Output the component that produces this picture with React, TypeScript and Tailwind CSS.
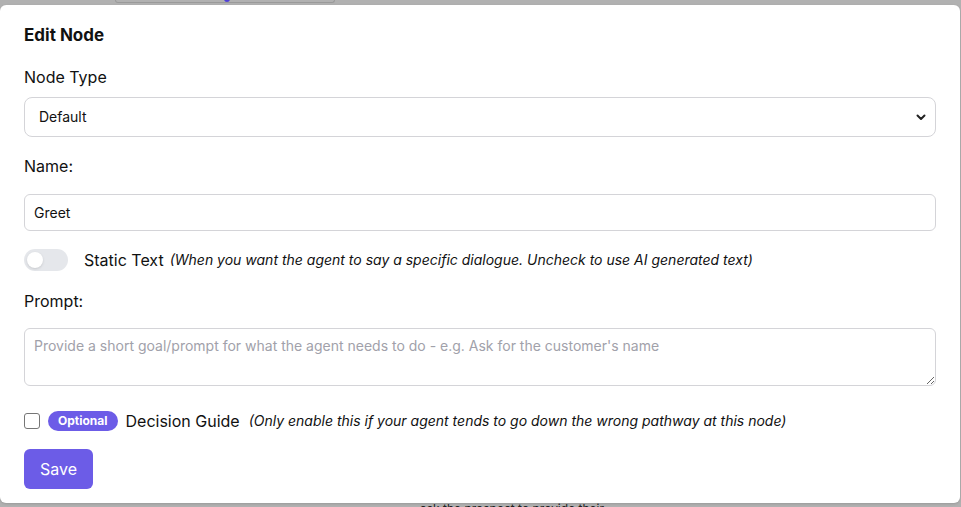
import React from 'react';

function Chevron() {
  return (
    <svg width="12" height="12" viewBox="0 0 12 12" fill="none" className="text-[#222]">
      <path d="M2.5 4.5L6 8L9.5 4.5" stroke="currentColor" strokeWidth="2" strokeLinecap="round" strokeLinejoin="round" />
    </svg>
  );
}

export default function App() {
  return (
    <div
      className="h-[507px] w-[961px] overflow-hidden bg-[#b1b1b1] bg-[radial-gradient(#8f8f8f_1px,transparent_1px)] bg-[length:12px_12px] font-['Inter','Noto_Sans',sans-serif] text-[#111]"
    >
      {/* bottom edge of a node behind the modal */}
      <div className="relative ml-[115px] h-[3px] w-[220px] rounded-b border-x border-b border-[#9a9a9a]">
        <span className="absolute left-[108px] top-[-4px] h-[6px] w-[6px] rounded-full bg-[#4f3fd8]" />
      </div>

      <div className="mt-[2px] flex h-[498px] w-[960px] flex-col rounded-md bg-white px-6 pt-4 shadow">
        <h2 className="text-[17px] font-bold leading-7">Edit Node</h2>

        <label className="mt-4 text-base leading-6">Node Type</label>
        <div className="mt-2 flex h-10 items-center justify-between rounded-lg border border-[#d4d4d8] pl-[14px] pr-2 text-sm">
          <span>Default</span>
          <Chevron />
        </div>

        <label className="mt-[17px] text-base leading-6">Name:</label>
        <input
          readOnly
          value="Greet"
          className="mt-4 h-[37px] rounded-md border border-[#d4d4d8] px-[9px] text-sm outline-none"
        />

        <div className="mt-[17px] flex items-center">
          <div className="flex h-[22px] w-11 items-center rounded-full bg-[#e5e7eb] px-[3px]">
            <span className="h-4 w-4 rounded-full bg-white shadow-sm" />
          </div>
          <span className="ml-4 text-base">Static Text</span>
          <span className="ml-[6px] text-sm italic">
            (When you want the agent to say a specific dialogue. Uncheck to use AI generated text)
          </span>
        </div>

        <label className="mt-[17px] text-base leading-6">Prompt:</label>
        <textarea
          className="mt-[15px] h-[58px] rounded-md border border-[#d4d4d8] px-[9px] py-[7px] text-sm outline-none placeholder:text-[#a1a1aa]"
          placeholder="Provide a short goal/prompt for what the agent needs to do - e.g. Ask for the customer's name"
        />

        <div className="mt-[23px] flex h-6 items-center">
          <span className="h-4 w-4 rounded-[3px] border border-[#767676] bg-white" />
          <span className="ml-2 rounded-full bg-[#6c5ce7] px-[10px] py-[2px] text-xs font-bold leading-4 text-white">
            Optional
          </span>
          <span className="ml-2 text-base">Decision Guide</span>
          <span className="ml-[9px] text-sm italic">
            (Only enable this if your agent tends to go down the wrong pathway at this node)
          </span>
        </div>

        <button className="mt-4 h-10 w-[69px] rounded-md bg-[#6c5ce7] text-base text-white">Save</button>
      </div>

      <div className="ml-[420px] mt-[-2px] text-xs leading-4 text-[#222]">ask the prospect to provide their</div>
    </div>
  );
}
